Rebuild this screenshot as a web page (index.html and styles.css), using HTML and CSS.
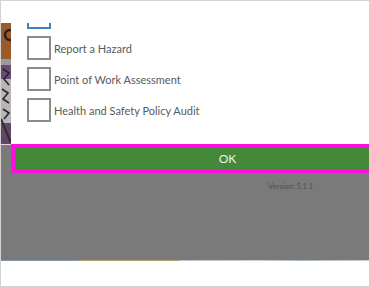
FILE: index.html
```html
<!DOCTYPE html>
<html>
<head>
    <meta charset="UTF-8">
    <title>Forms</title>
    <link rel="stylesheet" href="styles.css">
</head>
<body>
    <div class="frame">
        <div class="screen">
            <div class="topbar"></div>
            <div class="main">
                <div class="art">
                    <svg width="10" height="122" viewBox="0 0 10 122">
                        <rect x="0" y="0" width="10" height="36" fill="#9a5a2a"/>
                        <circle cx="9" cy="12" r="5" fill="none" stroke="#2a2020" stroke-width="2.5"/>
                        <rect x="0" y="36" width="10" height="6" fill="#9c9a98"/>
                        <rect x="0" y="42" width="10" height="14" fill="#6b4a78"/>
                        <rect x="0" y="56" width="10" height="44" fill="#b8b4b8"/>
                        <path d="M2 46 L8 50 L3 56 L8 62 M1 66 L7 70 L2 76 L8 80 M2 86 L8 90 L3 96" fill="none" stroke="#2a2428" stroke-width="1.6"/>
                        <rect x="0" y="100" width="10" height="22" fill="#5e4868"/>
                        <path d="M0 96 L10 120" stroke="#3b2a20" stroke-width="2"/>
                    </svg>
                </div>
                <div class="dialog">
                    <ul class="choices">
                        <li class="choice focused"><span class="box"></span>Take 5</li>
                        <li class="choice"><span class="box"></span>Report a Hazard</li>
                        <li class="choice"><span class="box"></span>Point of Work Assessment</li>
                        <li class="choice"><span class="box"></span>Health and Safety Policy Audit</li>
                    </ul>
                </div>
            </div>
            <div class="actions">
                <button class="ok">OK</button>
            </div>
            <div class="version">Version: 5.1.1</div>
        </div>
        <div class="taskline"></div>
        <div class="footer"></div>
    </div>
</body>
</html>
```

FILE: styles.css
```css
html,
body {
    margin: 0;
    width: 370px;
    height: 287px;
    overflow: hidden;
    background: #fff;
    font-family: Lato, "Open Sans", sans-serif;
}
.frame {
    box-sizing: border-box;
    width: 370px;
    height: 287px;
    border: 1px solid #d3d3d3;
    display: flex;
    flex-direction: column;
}
.screen {
    height: 259px;
    background: #7a7a7a;
    overflow: hidden;
    display: flex;
    flex-direction: column;
}
.topbar {
    height: 22px;
    background: #fff;
    flex: none;
}
.main {
    display: flex;
    height: 121px;
    flex: none;
}
.art {
    width: 10px;
    flex: none;
    overflow: hidden;
}
.art svg {
    display: block;
}
.dialog {
    flex: 1;
    background: #fff;
    overflow: hidden;
}
.choices {
    list-style: none;
    margin: -18px 0 0 0;
    padding: 0 0 0 16px;
    display: flex;
    flex-direction: column;
    gap: 7px;
}
.choice {
    display: flex;
    align-items: center;
    height: 24px;
    font-size: 11px;
    color: #5a5a5a;
}
.box {
    box-sizing: border-box;
    width: 24px;
    height: 24px;
    border: 2px solid #8c8c8c;
    background: #fff;
    margin-right: 3px;
}
.focused .box {
    border-color: #3f7fbf;
}
.actions {
    flex: none;
    height: 29px;
    padding-left: 10px;
    box-shadow: inset 0 1px 0 #f8c8f0;
}
.ok {
    box-sizing: border-box;
    display: block;
    width: 432px;
    height: 29px;
    margin: 0;
    padding: 0;
    border: 3px solid #ff10e0;
    border-left-width: 4px;
    background: #44883a;
    color: #eef4e8;
    font-family: Lato, "Open Sans", sans-serif;
    font-size: 12px;
}
.version {
    margin: 9px 0 0 267px;
    font-size: 7.5px;
    color: #505050;
}
.taskline {
    height: 1px;
    flex: none;
    background: linear-gradient(90deg, #8496a8 0, #8496a8 77px, #b0a478 78px, #b0a478 178px, #b8c4cc 179px, #c8d0d8 260px, #a8b8c4 300px, #d0d0c8 370px);
}
.footer {
    flex: 1;
    background: #fff;
}
```
